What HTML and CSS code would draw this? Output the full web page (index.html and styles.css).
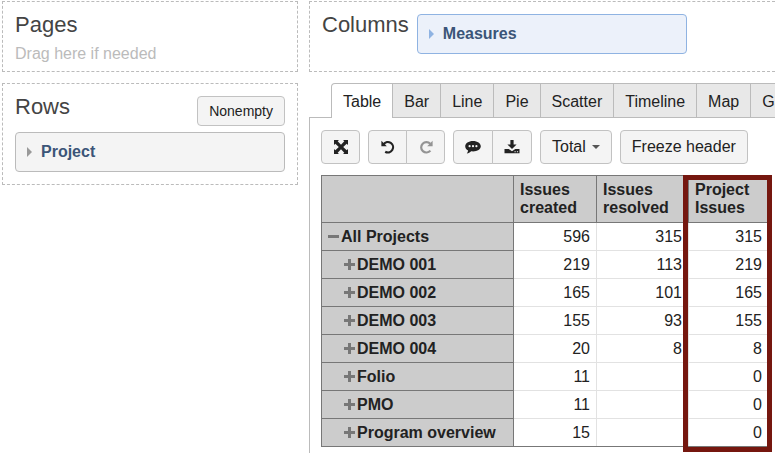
FILE: index.html
```
<!DOCTYPE html>
<html lang="en">
<head>
    <meta charset="UTF-8">
    <title>Report</title>
    <link rel="stylesheet" href="styles.css">
</head>
<body>

<div class="report">
    <aside class="sidebar">
        <section class="dropzone">
            <h2>Pages</h2>
            <p class="hint">Drag here if needed</p>
        </section>
        <section class="dropzone rows">
            <div class="rows-header">
                <h2>Rows</h2>
                <button class="btn btn-small" type="button">Nonempty</button>
            </div>
            <button class="dimension" type="button"><span class="arrow"></span>Project</button>
        </section>
    </aside>

    <main class="main">
        <section class="dropzone columns">
            <h2>Columns</h2>
            <button class="dimension measures" type="button"><span class="arrow"></span>Measures</button>
        </section>

        <nav class="tabs">
            <a class="tab active" href="#table">Table</a>
            <a class="tab" href="#bar">Bar</a>
            <a class="tab" href="#line">Line</a>
            <a class="tab" href="#pie">Pie</a>
            <a class="tab" href="#scatter">Scatter</a>
            <a class="tab" href="#timeline">Timeline</a>
            <a class="tab" href="#map">Map</a>
            <a class="tab" href="#gauge">Gauge</a>
        </nav>

        <div class="panel">
            <div class="toolbar">
                <button class="btn btn-icon" type="button" aria-label="Full screen">
                    <svg width="14" height="14" viewBox="0 0 14 14">
                        <path d="M0 0h5L3.700 1.300 7 4.800l3.300-3.500L9 0h5v5l-1.300-1.300L9.200 7l3.500 3.300L14 9v5H9l1.300-1.300L7 9.200l-3.300 3.500L5 14H0V9l1.300 1.300L4.800 7 1.300 3.700 0 5z"/>
                    </svg>
                </button>
                <div class="btn-group">
                    <button class="btn btn-icon" type="button" aria-label="Undo">
                        <svg width="14" height="14" viewBox="0 0 14 14">
                            <path d="M2.600 4.300A5.200 5.200 0 1 1 4.200 11.700" fill="none" stroke="#222" stroke-width="2.200"/>
                            <path d="M.4.8v5.400h5.400z"/>
                        </svg>
                    </button>
                    <button class="btn btn-icon" type="button" aria-label="Redo" disabled>
                        <svg width="14" height="14" viewBox="0 0 14 14">
                            <path d="M11.200 3.800A5.200 5.200 0 1 0 11.400 10.600" fill="none" stroke="#222" stroke-width="2.200"/>
                            <path d="M13.600.8v5.400H8.200z"/>
                        </svg>
                    </button>
                </div>
                <div class="btn-group wide">
                    <button class="btn btn-icon" type="button" aria-label="Comment">
                        <svg width="16" height="14" viewBox="0 0 16 14">
                            <path d="M8 1c4.400 0 7.800 2.300 7.800 5.200S12.400 11.400 8 11.400c-.6 0-1.200 0-1.800-.1C5 12.500 3.500 13.300 1.800 13.500c.8-.8 1.200-1.700 1.300-2.900C1.300 9.600.2 8 .2 6.200.2 3.300 3.600 1 8 1z"/>
                            <g fill="#f4f4f4">
                                <circle cx="4.600" cy="6.200" r="1.100"/>
                                <circle cx="8" cy="6.200" r="1.100"/>
                                <circle cx="11.400" cy="6.200" r="1.100"/>
                            </g>
                        </svg>
                    </button>
                    <button class="btn btn-icon" type="button" aria-label="Export">
                        <svg width="16" height="14" viewBox="0 0 16 14">
                            <path d="M6.400 0h3.200v4.400h3L8 9 3.400 4.400h3z"/>
                            <path d="M.5 9h4.200L8 11.200 11.300 9h4.200v4.300H.5z"/>
                            <path d="M10.500 11.200h1.200v1h-1.200zM12.900 11.200h1.200v1h-1.200z" fill="#f4f4f4"/>
                        </svg>
                    </button>
                </div>
                <button class="btn" type="button">Total<span class="caret"></span></button>
                <button class="btn" type="button">Freeze header</button>
            </div>

            <div class="results">
                <table>
                    <thead>
                        <tr>
                            <th class="col-name"></th>
                            <th class="col-created">Issues created</th>
                            <th class="col-resolved">Issues resolved</th>
                            <th class="col-project">Project Issues</th>
                        </tr>
                    </thead>
                    <tbody>
                        <tr>
                            <th><button class="toggle minus" type="button" aria-label="Collapse"></button>All Projects</th>
                            <td>596</td><td>315</td><td>315</td>
                        </tr>
                        <tr class="child">
                            <th><button class="toggle" type="button" aria-label="Expand"></button>DEMO 001</th>
                            <td>219</td><td>113</td><td>219</td>
                        </tr>
                        <tr class="child">
                            <th><button class="toggle" type="button" aria-label="Expand"></button>DEMO 002</th>
                            <td>165</td><td>101</td><td>165</td>
                        </tr>
                        <tr class="child">
                            <th><button class="toggle" type="button" aria-label="Expand"></button>DEMO 003</th>
                            <td>155</td><td>93</td><td>155</td>
                        </tr>
                        <tr class="child">
                            <th><button class="toggle" type="button" aria-label="Expand"></button>DEMO 004</th>
                            <td>20</td><td>8</td><td>8</td>
                        </tr>
                        <tr class="child">
                            <th><button class="toggle" type="button" aria-label="Expand"></button>Folio</th>
                            <td>11</td><td></td><td>0</td>
                        </tr>
                        <tr class="child">
                            <th><button class="toggle" type="button" aria-label="Expand"></button>PMO</th>
                            <td>11</td><td></td><td>0</td>
                        </tr>
                        <tr class="child">
                            <th><button class="toggle" type="button" aria-label="Expand"></button>Program overview</th>
                            <td>15</td><td></td><td>0</td>
                        </tr>
                    </tbody>
                </table>
                <div class="highlight"></div>
            </div>
        </div>
    </main>
</div>

</body>
</html>
```
FILE: styles.css
```
* {
    box-sizing: border-box;
    margin: 0;
    padding: 0;
}

body {
    background: #fff;
    font-family: "Liberation Sans", Arial, sans-serif;
    font-size: 16px;
    line-height: 18px;
    color: #222;
    overflow: hidden;
}

button {
    font: inherit;
    color: inherit;
    cursor: pointer;
}

h2 {
    font-size: 22px;
    font-weight: 400;
    line-height: 26px;
    color: #444;
}

.report {
    display: flex;
    gap: 11px;
    min-height: 100vh;
    padding: 1px 0 0 2px;
}

.sidebar {
    display: flex;
    flex-direction: column;
    gap: 11px;
    flex: 0 0 296px;
}

.main {
    display: flex;
    flex-direction: column;
    flex: 1;
    min-width: 0;
}

.dropzone {
    min-height: 71px;
    padding: 10px 12px 8px;
    border: 1px dashed #bbb;
}

.hint {
    margin-top: 7px;
    color: #bbb;
}

.rows {
    padding-bottom: 12px;
}

.rows-header {
    display: flex;
    justify-content: space-between;
    margin-bottom: 6px;
}

.columns {
    display: flex;
    align-items: flex-start;
    gap: 8px;
    margin-bottom: 11px;
    border-right: 0;
}

/* dimension pills */
.dimension {
    display: flex;
    align-items: center;
    width: 100%;
    height: 40px;
    padding: 0 11px;
    background: #f4f4f4;
    border: 1px solid #bbb;
    border-radius: 4px;
    font-weight: 700;
    color: #3b5578;
}

.measures {
    width: 270px;
    margin-top: 2px;
    background: #ecf1fa;
    border-color: #8fb3e2;
}

.arrow {
    margin-right: 9px;
    border: 5px solid transparent;
    border-left-color: #999;
    border-right-width: 0;
}

.measures .arrow {
    border-left-color: #8fb3e2;
}

/* buttons */
.btn {
    display: flex;
    align-items: center;
    justify-content: center;
    height: 34px;
    padding: 0 11px;
    background: #f4f4f4;
    border: 1px solid #c2c2c2;
    border-radius: 4px;
    white-space: nowrap;
}

.btn svg {
    fill: #222;
}

.btn-small {
    height: 30px;
    margin-top: 2px;
    font-size: 14px;
}

.btn-icon {
    width: 39px;
    padding: 0;
}

.btn:disabled svg {
    opacity: 0.45;
}

.btn-group {
    display: flex;
}

.btn-group .btn:first-child {
    border-radius: 4px 0 0 4px;
}

.btn-group .btn:last-child {
    margin-left: -1px;
    border-radius: 0 4px 4px 0;
}

.btn-group.wide .btn {
    width: 40px;
}

.caret {
    margin-left: 6px;
    border: 4px solid transparent;
    border-top-color: #555;
    border-bottom-width: 0;
}

/* chart type tabs */
.tabs {
    display: flex;
    padding-left: 22px;
    border-bottom: 1px solid #bbb;
}

.tab {
    height: 34px;
    padding: 9px 11px 0;
    background: #e8e8e8;
    border: 1px solid #bbb;
    border-left: 0;
    border-bottom: 0;
    color: #222;
    text-decoration: none;
}

.tab.active {
    height: 35px;
    margin-bottom: -1px;
    background: #fff;
    border-left: 1px solid #bbb;
    border-radius: 4px 0 0 0;
}

.panel {
    flex: 1;
    padding: 12px 11px;
    border-left: 1px solid #bbb;
}

.toolbar {
    display: flex;
    gap: 8px;
    margin-bottom: 11px;
}

/* results table */
.results {
    position: relative;
    width: 448px;
}

table {
    width: 100%;
    table-layout: fixed;
    border-collapse: collapse;
    border: 1px solid #777;
}

th {
    background: #ccc;
    border: 1px solid #777;
    text-align: left;
}

thead th {
    height: 47px;
    padding: 0 6px;
}

tbody th,
td {
    height: 28px;
    padding: 0 6px;
}

td {
    border: 1px solid #e2e2e2;
    text-align: right;
}

tbody tr:last-child td {
    border-bottom-color: #777;
}

.col-name {
    width: 192px;
}

.col-created {
    width: 83px;
}

.col-resolved {
    width: 92px;
}

.child th {
    padding-left: 22px;
}

/* plus / minus signs */
.toggle {
    width: 11px;
    height: 11px;
    margin-right: 2px;
    border: 0;
    background:
        linear-gradient(#777, #777) center / 11px 3px no-repeat,
        linear-gradient(#777, #777) center / 3px 11px no-repeat;
}

.toggle.minus {
    background: linear-gradient(#777, #777) center / 11px 3px no-repeat;
}

.highlight {
    position: absolute;
    top: 0;
    right: -3px;
    bottom: -5px;
    width: 89px;
    border: 5px solid #75170f;
    pointer-events: none;
}
```
